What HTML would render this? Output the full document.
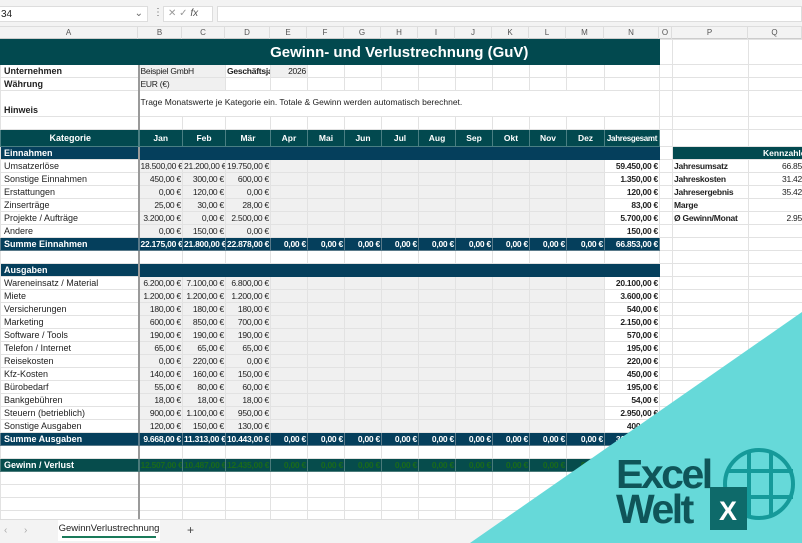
<!DOCTYPE html>
<html><head><meta charset="utf-8">
<style>
*{margin:0;padding:0;box-sizing:border-box}
body{width:802px;height:543px;overflow:hidden;background:#fff;font-family:"Liberation Sans",sans-serif;font-size:9px;color:#222;position:relative}
.top{position:absolute;left:0;top:0;width:802px;height:27px;background:#f3f3f3;border-bottom:1px solid #ddd}
.nb{position:absolute;left:0;top:6px;width:148px;height:16px;background:#fff;border:1px solid #ddd;border-left:none;font-size:10px;padding:2px 1px}
.fx{position:absolute;left:163px;top:6px;width:50px;height:16px;background:#fff;border:1px solid #ddd;color:#999;font-size:10px;padding:1px 4px}
.fb{position:absolute;left:217px;top:6px;width:585px;height:16px;background:#fff;border:1px solid #ddd}
.ch{position:absolute;left:0;top:27px;width:802px;height:12px;background:#f3f3f3;border-bottom:1px solid #ccc}
.ch span{position:absolute;top:0;text-align:center;color:#555;font-size:8px;line-height:12px;border-right:1px solid #ddd;height:12px}
table{position:absolute;left:0;top:39px;border-collapse:collapse;table-layout:fixed;width:802px}
td{border:1px solid #e2e2e2;height:13px;padding:0 1px;white-space:nowrap;overflow:hidden;line-height:11px;font-size:8.5px;letter-spacing:-0.25px}
td.a{border-right:2px solid #9a9a9a;letter-spacing:0;font-size:9px;padding-left:3px}
.g td.n{background:#f0f0f0;text-align:right}
.g td.e{background:#f0f0f0}
.g td.t{text-align:right;font-weight:bold}
.hd td{background:#02494f;color:#fff;font-weight:bold;text-align:center;border-color:#4a7f83;letter-spacing:0}
.sec td{background:#053f5c;color:#fff;font-weight:bold;border-color:#053f5c}
.sum td{background:#053f5c;color:#fff;font-weight:bold;text-align:right;border-color:#5a7a8a}
.sum td.a,.gw td.a{text-align:left}
.gw td{background:#064c4c;color:#1a6a1a;font-weight:bold;text-align:right;border-color:#4a7a7a}
.gw td.a{color:#fff}
.b{font-weight:bold}
.tabs{position:absolute;left:0;top:519px;width:802px;height:24px;background:#f3f3f3;border-top:1px solid #ddd}
</style></head><body>
<div class="top"></div>
<div class="nb">34<span style="position:absolute;right:4px;top:1px;color:#666">⌄</span></div>
<div style="position:absolute;left:153px;top:7px;color:#666;font-size:10px">⋮</div>
<div class="fx">✕ ✓ <i style="color:#555">fx</i></div>
<div class="fb"></div>
<div class="ch">
<span style="left:0;width:138px">A</span><span style="left:138px;width:44px">B</span><span style="left:182px;width:43px">C</span><span style="left:225px;width:45px">D</span><span style="left:270px;width:37px">E</span><span style="left:307px;width:37px">F</span><span style="left:344px;width:37px">G</span><span style="left:381px;width:37px">H</span><span style="left:418px;width:37px">I</span><span style="left:455px;width:37px">J</span><span style="left:492px;width:37px">K</span><span style="left:529px;width:37px">L</span><span style="left:566px;width:38px">M</span><span style="left:604px;width:55px">N</span><span style="left:659px;width:13px">O</span><span style="left:672px;width:76px">P</span><span style="left:748px;width:54px">Q</span>
</div>
<table>
<colgroup><col style="width:138px"><col style="width:44px"><col style="width:43px"><col style="width:45px"><col style="width:37px"><col style="width:37px"><col style="width:37px"><col style="width:37px"><col style="width:37px"><col style="width:37px"><col style="width:37px"><col style="width:37px"><col style="width:38px"><col style="width:55px"><col style="width:13px"><col style="width:76px"><col style="width:54px"></colgroup>
<tr style="height:25px"><td class="a" style="background:#02494f;height:25px;border-color:#02494f"></td><td colspan="13" style="background:#02494f;color:#fff;font-weight:bold;font-size:15px;letter-spacing:0;text-align:center;border-color:#02494f">Gewinn- und Verlustrechnung (GuV)</td><td></td><td></td><td></td></tr>
<tr><td class="a b">Unternehmen</td><td colspan="2" style="background:#f0f0f0">Beispiel GmbH</td><td class="b" style="overflow:hidden">Geschäftsja</td><td style="text-align:right;background:#f0f0f0">2026</td><td></td><td></td><td></td><td></td><td></td><td></td><td></td><td></td><td></td><td></td><td></td><td></td></tr>
<tr><td class="a b">Währung</td><td colspan="2" style="background:#f0f0f0">EUR (€)</td><td></td><td></td><td></td><td></td><td></td><td></td><td></td><td></td><td></td><td></td><td></td><td></td><td></td><td></td></tr>
<tr style="height:26px"><td class="a b" style="vertical-align:bottom;height:26px">Hinweis</td><td colspan="13" style="vertical-align:top;padding-top:6px;letter-spacing:0">Trage Monatswerte je Kategorie ein. Totale &amp; Gewinn werden automatisch berechnet.</td><td></td><td></td><td></td></tr>
<tr><td class="a"></td><td></td><td></td><td></td><td></td><td></td><td></td><td></td><td></td><td></td><td></td><td></td><td></td><td></td><td></td><td></td><td></td></tr>
<tr class="hd" style="height:17px"><td class="a" style="height:17px">Kategorie</td><td>Jan</td><td>Feb</td><td>Mär</td><td>Apr</td><td>Mai</td><td>Jun</td><td>Jul</td><td>Aug</td><td>Sep</td><td>Okt</td><td>Nov</td><td>Dez</td><td style="font-size:8px;padding:0;letter-spacing:-0.3px">Jahresgesamt</td><td style="background:#fff;border-color:#e2e2e2"></td><td style="background:#fff;border-color:#e2e2e2"></td><td style="background:#fff;border-color:#e2e2e2"></td></tr>
<tr><td class="a" style="background:#053f5c;color:#fff;font-weight:bold">Einnahmen</td><td colspan="13" style="background:#053f5c;border-color:#053f5c"></td><td></td><td colspan="2" style="background:#02494f;color:#fff;font-weight:bold;padding-left:90px;letter-spacing:0">Kennzahlen</td></tr>
<tr class="g"><td class="a">Umsatzerlöse</td><td class="n">18.500,00 €</td><td class="n">21.200,00 €</td><td class="n">19.750,00 €</td><td class="e"></td><td class="e"></td><td class="e"></td><td class="e"></td><td class="e"></td><td class="e"></td><td class="e"></td><td class="e"></td><td class="e"></td><td class="t">59.450,00 €</td><td></td><td class="b">Jahresumsatz</td><td style="text-align:right;padding-right:0">66.85</td></tr>
<tr class="g"><td class="a">Sonstige Einnahmen</td><td class="n">450,00 €</td><td class="n">300,00 €</td><td class="n">600,00 €</td><td class="e"></td><td class="e"></td><td class="e"></td><td class="e"></td><td class="e"></td><td class="e"></td><td class="e"></td><td class="e"></td><td class="e"></td><td class="t">1.350,00 €</td><td></td><td class="b">Jahreskosten</td><td style="text-align:right;padding-right:0">31.42</td></tr>
<tr class="g"><td class="a">Erstattungen</td><td class="n">0,00 €</td><td class="n">120,00 €</td><td class="n">0,00 €</td><td class="e"></td><td class="e"></td><td class="e"></td><td class="e"></td><td class="e"></td><td class="e"></td><td class="e"></td><td class="e"></td><td class="e"></td><td class="t">120,00 €</td><td></td><td class="b">Jahresergebnis</td><td style="text-align:right;padding-right:0">35.42</td></tr>
<tr class="g"><td class="a">Zinserträge</td><td class="n">25,00 €</td><td class="n">30,00 €</td><td class="n">28,00 €</td><td class="e"></td><td class="e"></td><td class="e"></td><td class="e"></td><td class="e"></td><td class="e"></td><td class="e"></td><td class="e"></td><td class="e"></td><td class="t">83,00 €</td><td></td><td class="b">Marge</td><td></td></tr>
<tr class="g"><td class="a">Projekte / Aufträge</td><td class="n">3.200,00 €</td><td class="n">0,00 €</td><td class="n">2.500,00 €</td><td class="e"></td><td class="e"></td><td class="e"></td><td class="e"></td><td class="e"></td><td class="e"></td><td class="e"></td><td class="e"></td><td class="e"></td><td class="t">5.700,00 €</td><td></td><td class="b">Ø Gewinn/Monat</td><td style="text-align:right;padding-right:0">2.95</td></tr>
<tr class="g"><td class="a">Andere</td><td class="n">0,00 €</td><td class="n">150,00 €</td><td class="n">0,00 €</td><td class="e"></td><td class="e"></td><td class="e"></td><td class="e"></td><td class="e"></td><td class="e"></td><td class="e"></td><td class="e"></td><td class="e"></td><td class="t">150,00 €</td><td></td><td></td><td></td></tr>
<tr class="sum"><td class="a">Summe Einnahmen</td><td>22.175,00 €</td><td>21.800,00 €</td><td>22.878,00 €</td><td>0,00 €</td><td>0,00 €</td><td>0,00 €</td><td>0,00 €</td><td>0,00 €</td><td>0,00 €</td><td>0,00 €</td><td>0,00 €</td><td>0,00 €</td><td>66.853,00 €</td><td style="background:#fff;border-color:#e2e2e2"></td><td style="background:#fff;border-color:#e2e2e2"></td><td style="background:#fff;border-color:#e2e2e2"></td></tr>
<tr><td class="a"></td><td></td><td></td><td></td><td></td><td></td><td></td><td></td><td></td><td></td><td></td><td></td><td></td><td></td><td></td><td></td><td></td></tr>
<tr><td class="a" style="background:#053f5c;color:#fff;font-weight:bold">Ausgaben</td><td colspan="13" style="background:#053f5c;border-color:#053f5c"></td><td></td><td></td><td></td></tr>
<tr class="g"><td class="a">Wareneinsatz / Material</td><td class="n">6.200,00 €</td><td class="n">7.100,00 €</td><td class="n">6.800,00 €</td><td class="e"></td><td class="e"></td><td class="e"></td><td class="e"></td><td class="e"></td><td class="e"></td><td class="e"></td><td class="e"></td><td class="e"></td><td class="t">20.100,00 €</td><td></td><td></td><td></td></tr>
<tr class="g"><td class="a">Miete</td><td class="n">1.200,00 €</td><td class="n">1.200,00 €</td><td class="n">1.200,00 €</td><td class="e"></td><td class="e"></td><td class="e"></td><td class="e"></td><td class="e"></td><td class="e"></td><td class="e"></td><td class="e"></td><td class="e"></td><td class="t">3.600,00 €</td><td></td><td></td><td></td></tr>
<tr class="g"><td class="a">Versicherungen</td><td class="n">180,00 €</td><td class="n">180,00 €</td><td class="n">180,00 €</td><td class="e"></td><td class="e"></td><td class="e"></td><td class="e"></td><td class="e"></td><td class="e"></td><td class="e"></td><td class="e"></td><td class="e"></td><td class="t">540,00 €</td><td></td><td></td><td></td></tr>
<tr class="g"><td class="a">Marketing</td><td class="n">600,00 €</td><td class="n">850,00 €</td><td class="n">700,00 €</td><td class="e"></td><td class="e"></td><td class="e"></td><td class="e"></td><td class="e"></td><td class="e"></td><td class="e"></td><td class="e"></td><td class="e"></td><td class="t">2.150,00 €</td><td></td><td></td><td></td></tr>
<tr class="g"><td class="a">Software / Tools</td><td class="n">190,00 €</td><td class="n">190,00 €</td><td class="n">190,00 €</td><td class="e"></td><td class="e"></td><td class="e"></td><td class="e"></td><td class="e"></td><td class="e"></td><td class="e"></td><td class="e"></td><td class="e"></td><td class="t">570,00 €</td><td></td><td></td><td></td></tr>
<tr class="g"><td class="a">Telefon / Internet</td><td class="n">65,00 €</td><td class="n">65,00 €</td><td class="n">65,00 €</td><td class="e"></td><td class="e"></td><td class="e"></td><td class="e"></td><td class="e"></td><td class="e"></td><td class="e"></td><td class="e"></td><td class="e"></td><td class="t">195,00 €</td><td></td><td></td><td></td></tr>
<tr class="g"><td class="a">Reisekosten</td><td class="n">0,00 €</td><td class="n">220,00 €</td><td class="n">0,00 €</td><td class="e"></td><td class="e"></td><td class="e"></td><td class="e"></td><td class="e"></td><td class="e"></td><td class="e"></td><td class="e"></td><td class="e"></td><td class="t">220,00 €</td><td></td><td></td><td></td></tr>
<tr class="g"><td class="a">Kfz-Kosten</td><td class="n">140,00 €</td><td class="n">160,00 €</td><td class="n">150,00 €</td><td class="e"></td><td class="e"></td><td class="e"></td><td class="e"></td><td class="e"></td><td class="e"></td><td class="e"></td><td class="e"></td><td class="e"></td><td class="t">450,00 €</td><td></td><td></td><td></td></tr>
<tr class="g"><td class="a">Bürobedarf</td><td class="n">55,00 €</td><td class="n">80,00 €</td><td class="n">60,00 €</td><td class="e"></td><td class="e"></td><td class="e"></td><td class="e"></td><td class="e"></td><td class="e"></td><td class="e"></td><td class="e"></td><td class="e"></td><td class="t">195,00 €</td><td></td><td></td><td></td></tr>
<tr class="g"><td class="a">Bankgebühren</td><td class="n">18,00 €</td><td class="n">18,00 €</td><td class="n">18,00 €</td><td class="e"></td><td class="e"></td><td class="e"></td><td class="e"></td><td class="e"></td><td class="e"></td><td class="e"></td><td class="e"></td><td class="e"></td><td class="t">54,00 €</td><td></td><td></td><td></td></tr>
<tr class="g"><td class="a">Steuern (betrieblich)</td><td class="n">900,00 €</td><td class="n">1.100,00 €</td><td class="n">950,00 €</td><td class="e"></td><td class="e"></td><td class="e"></td><td class="e"></td><td class="e"></td><td class="e"></td><td class="e"></td><td class="e"></td><td class="e"></td><td class="t">2.950,00 €</td><td></td><td></td><td></td></tr>
<tr class="g"><td class="a">Sonstige Ausgaben</td><td class="n">120,00 €</td><td class="n">150,00 €</td><td class="n">130,00 €</td><td class="e"></td><td class="e"></td><td class="e"></td><td class="e"></td><td class="e"></td><td class="e"></td><td class="e"></td><td class="e"></td><td class="e"></td><td class="t">400,00 €</td><td></td><td></td><td></td></tr>
<tr class="sum"><td class="a">Summe Ausgaben</td><td>9.668,00 €</td><td>11.313,00 €</td><td>10.443,00 €</td><td>0,00 €</td><td>0,00 €</td><td>0,00 €</td><td>0,00 €</td><td>0,00 €</td><td>0,00 €</td><td>0,00 €</td><td>0,00 €</td><td>0,00 €</td><td>31.427,00 €</td><td style="background:#fff;border-color:#e2e2e2"></td><td style="background:#fff;border-color:#e2e2e2"></td><td style="background:#fff;border-color:#e2e2e2"></td></tr>
<tr><td class="a"></td><td></td><td></td><td></td><td></td><td></td><td></td><td></td><td></td><td></td><td></td><td></td><td></td><td></td><td></td><td></td><td></td></tr>
<tr class="gw"><td class="a">Gewinn / Verlust</td><td>12.507,00 €</td><td>10.487,00 €</td><td>12.435,00 €</td><td>0,00 €</td><td>0,00 €</td><td>0,00 €</td><td>0,00 €</td><td>0,00 €</td><td>0,00 €</td><td>0,00 €</td><td>0,00 €</td><td>0,00 €</td><td>35.426,00 €</td><td style="background:#fff;border-color:#e2e2e2"></td><td style="background:#fff;border-color:#e2e2e2"></td><td style="background:#fff;border-color:#e2e2e2"></td></tr>
<tr><td class="a"></td><td></td><td></td><td></td><td></td><td></td><td></td><td></td><td></td><td></td><td></td><td></td><td></td><td></td><td></td><td></td><td></td></tr>
<tr><td class="a"></td><td></td><td></td><td></td><td></td><td></td><td></td><td></td><td></td><td></td><td></td><td></td><td></td><td></td><td></td><td></td><td></td></tr>
<tr><td class="a"></td><td></td><td></td><td></td><td></td><td></td><td></td><td></td><td></td><td></td><td></td><td></td><td></td><td></td><td></td><td></td><td></td></tr>
<tr><td class="a"></td><td></td><td></td><td></td><td></td><td></td><td></td><td></td><td></td><td></td><td></td><td></td><td></td><td></td><td></td><td></td><td></td></tr>
</table>
<div class="tabs">
<span style="position:absolute;left:4px;top:5px;color:#aaa;font-size:10px">‹</span>
<span style="position:absolute;left:24px;top:5px;color:#aaa;font-size:10px">›</span>
<div style="position:absolute;left:58px;top:0;width:102px;height:21px;background:#fff;text-align:center;font-size:9.5px;line-height:18px;color:#222">GewinnVerlustrechnung<div style="position:absolute;left:4px;right:4px;bottom:3px;height:2px;background:#1a7a5a"></div></div>
<span style="position:absolute;left:187px;top:3px;color:#444;font-size:12px">+</span>
</div>
<svg style="position:absolute;left:0;top:0" width="802" height="543">
<polygon points="470,543 802,312 802,543" fill="#66d9d9"/>
<g fill="none" stroke="#159a9a" stroke-width="4">
<circle cx="759" cy="484" r="34"/>
<line x1="727" y1="471" x2="793" y2="471"/><line x1="727" y1="497" x2="793" y2="497"/>
<line x1="749" y1="451" x2="749" y2="517"/><line x1="771" y1="451" x2="771" y2="517"/>
</g>
<text x="616" y="488" font-family="Liberation Sans,sans-serif" font-weight="bold" font-size="41" fill="#0f5559" letter-spacing="-2.5">Excel</text>
<text x="616" y="523" font-family="Liberation Sans,sans-serif" font-weight="bold" font-size="41" fill="#0f5559" letter-spacing="-2.5">Welt</text>
<rect x="710" y="487" width="37" height="43" fill="#0e6a6a"/>
<text x="728" y="520" text-anchor="middle" font-family="Liberation Sans,sans-serif" font-weight="bold" font-size="27" fill="#fff">X</text>
</svg>
</body></html>
